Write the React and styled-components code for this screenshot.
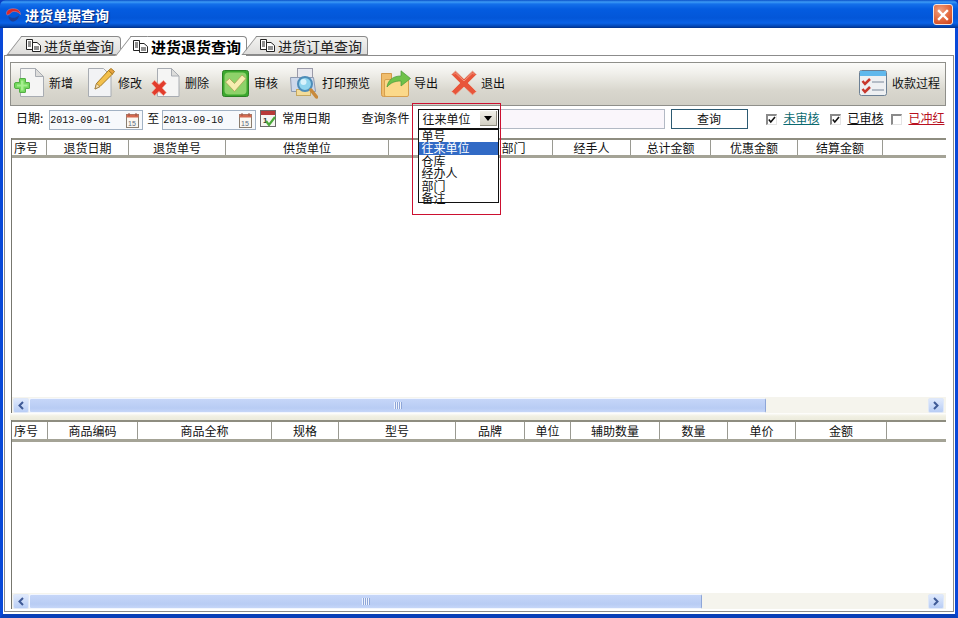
import React from "react";
import styled, { createGlobalStyle } from "styled-components";

const Global = createGlobalStyle`
  html, body { margin: 0; padding: 0; background: #fff; overflow: hidden; }
  * { box-sizing: border-box; }
  body { font: 12px "Noto Sans CJK SC", "Liberation Sans", sans-serif; color: #111; }
`;

const Window = styled.div`
  width: 958px; height: 618px; display: flex; flex-direction: column; background: #0a3fc4;
`;
const TitleBar = styled.div`
  height: 28px; flex: none; display: flex; align-items: center; padding: 1px 5px 0 6px;
  background: linear-gradient(180deg, #0a50c8 0, #3d9bf5 2px, #1470ea 4px, #045ce0 9px, #0356d8 18px, #0a62e6 23px, #0348b8 26px, #003088 28px);
  border-radius: 6px 6px 0 0;
`;
const Title = styled.span`
  margin-left: 4px; color: #fff; font-size: 14px; font-weight: 700; text-shadow: 1px 1px 1px #06297a;
`;
const CloseBtn = styled.div`
  margin-left: auto; width: 20px; height: 21px; border: 1px solid #f4e6e0; border-radius: 3px;
  display: flex; align-items: center; justify-content: center;
  background: radial-gradient(circle at 35% 30%, #f0a080 0, #e2673c 55%, #c93d18 100%);
`;
const Frame = styled.div`
  flex: 1; min-height: 0; display: flex; flex-direction: column; background: #fff; padding-top: 8px;
  border-left: 3px solid #0848d8; border-right: 3px solid #0848d8; border-bottom: 4px solid #0a40b8;
`;
const TabStrip = styled.div`
  height: 19px; flex: none; display: flex; align-items: stretch; padding-left: 19px;
  position: relative; z-index: 1;
`;
const Tab = styled.div`
  position: relative; display: flex; align-items: center; gap: 3px; margin-right: ${p => p.$mr}px;
  width: ${p => p.$w}px; height: ${p => p.$active ? 20 : 19}px; padding-left: ${p => p.$pl}px; white-space: nowrap;
  border: 1px solid #8a8a8a; border-left: none; ${p => p.$active ? "border-bottom: none;" : ""}
  border-radius: 0 4px 0 0;
  background: ${p => p.$active ? "#fff" : "linear-gradient(180deg,#f3f3f1,#dedddb)"};
  font-size: ${p => p.$active ? 15 : 14}px; font-weight: ${p => p.$active ? 700 : 400}; line-height: 1;
  color: ${p => p.$active ? "#000" : "#222"};
  &::before {
    content: ""; position: absolute; top: -1px; bottom: ${p => p.$active ? 0 : -1}px; left: -8px; width: 16px;
    transform: skewX(-38deg); border-left: 1px solid #8a8a8a; border-top: 1px solid #8a8a8a;
    background: ${p => p.$active ? "#fff" : "linear-gradient(180deg,#f3f3f1,#dedddb)"};
    border-bottom: ${p => p.$active ? "none" : "1px solid #8a8a8a"};
  }
  & > * { position: relative; z-index: 1; }
`;
const Panel = styled.div`
  flex: 1; min-height: 0; display: flex; flex-direction: column;
  margin: 0 1px 2px 1px; padding: 6px 7px 2px 5px; border: 1px solid #8c8c8c; background: #fff;
`;
const Toolbar = styled.div`
  height: 44px; flex: none; display: flex; align-items: center; padding: 0 5px 2px 3px;
  border: 1px solid #8f8f8a;
  background: linear-gradient(180deg, #fbfbf9 0, #f0efea 25%, #d9d7ce 65%, #d1cfc6 100%);
`;
const Tool = styled.div`
  display: flex; align-items: center; gap: ${p => p.$gap}px; margin-left: ${p => p.$ml || 0}px; flex: none;
  ${p => p.$right ? "margin-left: auto;" : ""}
`;
const ToolLabel = styled.span`font-size: 12px; line-height: 1; color: #111;`;

const FilterRow = styled.div`
  height: 32px; flex: none; display: flex; align-items: flex-start; padding: 3px 0 0 6px; font-size: 12px;
`;
const FilterText = styled.span`
  height: 20px; line-height: 18px; margin-left: ${p => p.$ml || 0}px; flex: none;
  color: ${p => p.$color || "#111"}; ${p => p.$underline ? "text-decoration: underline;" : ""}
`;
const DateBox = styled.div`
  width: 94px; height: 20px; margin: 1px 0 0 ${p => p.$ml}px; flex: none; display: flex; align-items: center;
  justify-content: space-between; padding: 0 1px 0 0; border: 1px solid #a2b2c4; background: #f7f9fc;
  font: 10px "Liberation Mono", monospace; color: #111;
`;
const Combo = styled.div`
  position: relative; width: 81px; height: 20px; margin-left: ${p => p.$ml}px; flex: none; z-index: 3;
  display: flex; align-items: center; justify-content: space-between; padding: 0 1px 1px 3px;
  border: 1px solid #111; background: #fff; font-size: 12px;
`;
const ComboArrow = styled.span`
  width: 17px; height: 15px; display: flex; align-items: center; justify-content: center;
  background: linear-gradient(180deg,#f2f1ea,#d3d0c4); border-right: 1px solid #8e8c80; border-bottom: 1px solid #8e8c80;
  &::after { content: ""; border: 4px solid transparent; border-top: 5px solid #000; border-bottom: none; }
`;
const Highlight = styled.div`
  position: absolute; left: -7px; top: -7px; width: 89px; height: 112px; border: 1px solid #cc1030; pointer-events: none;
`;
const DropList = styled.div`
  position: absolute; left: -1px; top: 18px; width: 81px; height: 75px; border: 1px solid #111; border-top-width: 2px;
  background: #fff;
`;
const DropItem = styled.div`
  height: 12.4px; line-height: 12px; padding-left: 2px; font-size: 12px; white-space: nowrap;
  background: ${p => p.$sel ? "#316ac5" : "transparent"}; color: ${p => p.$sel ? "#fff" : "#111"};
`;
const SearchInput = styled.div`
  width: 166px; height: 20px; flex: none; border: 1px solid #b2b9c4; border-left: none; background: #faf6fb;
`;
const QueryBtn = styled.div`
  width: 77px; height: 20px; margin-left: 6px; flex: none; border: 1px solid #2c5a72; background: #fff; padding: 0 2px 1px 0;
  display: flex; align-items: center; justify-content: center; font-size: 12px;
`;
const Check = styled.span`
  width: 11px; height: 11px; margin-left: ${p => p.$ml}px; margin-top: 5px; flex: none; background: #fff;
  border: 2px solid #8a8a8a; border-right: 1px solid #e4e4e4; border-bottom: 1px solid #e4e4e4;
  display: flex; align-items: center; justify-content: center;
`;

const GridWrap = styled.div`
  flex: ${p => p.$flex}; height: ${p => p.$h}px; min-height: 0; margin-left: 1px; background: #fff;
  border-left: 1px solid #77776f; display: flex; flex-direction: column; overflow: hidden;
`;
const HeaderRow = styled.div`
  height: ${p => p.$h}px; flex: none; display: flex; background: #fff;
  border-top: 2px solid #8e8d80; border-bottom: 3px solid #a4a396;
`;
const HeadCell = styled.div`
  width: ${p => p.$w}px; flex: ${p => p.$w ? "none" : 1}; display: flex; align-items: center; justify-content: center;
  font-size: 12px; line-height: 1; color: #111; border-right: ${p => p.$w ? "1px solid #9a9a92" : "none"};
  ${p => p.$left ? "justify-content: flex-start; padding-left: 2px;" : ""}
`;
const Scroll = styled.div`
  height: 16px; flex: none; margin-left: 1px; display: flex; align-items: center; padding: 0 2px 0 1px;
  background: #f5f4ed; border-left: 1px solid #77776f;
`;
const ScrollBtn = styled.div`
  width: 16px; height: 15px; flex: none; border: 1px solid #dfe8f8; border-radius: 2px;
  background: linear-gradient(180deg,#dfe9fc,#b8cdf5); display: flex; align-items: center; justify-content: center;
`;
const Thumb = styled.div`
  width: ${p => p.$w}px; height: 15px; flex: none; border: 1px solid #f2f6fe; border-right-color: #8ea6d8; border-radius: 2px;
  background: linear-gradient(180deg,#c6d6f8,#b8ccf4 70%,#c6d6f8); display: flex; align-items: center; justify-content: center;
`;
const Grip = styled.span`
  width: 8px; height: 7px;
  background: repeating-linear-gradient(90deg,#eef3fd 0 1px,#8ea6d8 1px 2px);
`;
const Spacer = styled.div`flex: 1;`;
const Divider = styled.div`height: 7px; flex: none; background: linear-gradient(180deg,#fff 0,#f1f0e4 3px,#ecebdc 100%);`;

const TabIcon = () => (
  <svg width="15" height="13" viewBox="0 0 15 13" style={{ flex: "none" }}>
    <path d="M.5.5h6v10h-6z" fill="#fff" stroke="#222" />
    <path d="M6.500 3.500h4.500l3.500 3v6h-8z" fill="#fff" stroke="#222" />
    <path d="M2 3h3M2 5h3M2 7h3M8 8h5M8 10h5" stroke="#222" />
  </svg>
);

const IconNew = () => (
  <svg width="30" height="30" viewBox="0 0 30 30" style={{ flex: "none" }}>
    <path d="M6.500.5h15l8 8v20h-23z" fill="#f5f5f4" stroke="#a8acb2" />
    <path d="M21.500.5v8h8z" fill="#dddddb" stroke="#a8acb2" />
    <path d="M6 10.500h5a.5.500 0 0 1 .5.500v3.500H15a.5.500 0 0 1 .5.500v5a.5.500 0 0 1-.5.500h-3.500v3.500a.5.500 0 0 1-.5.500H6a.5.500 0 0 1-.5-.500V20.500H2a1.500 1.500 0 0 1-1.500-1.500v-3a1.500 1.500 0 0 1 1.500-1.500h3.500V11a.5.500 0 0 1 .5-.500z" fill="#74d85e" stroke="#54ae46" />
    <path d="M7 12.500h2.500v4h4v2h-4v4H7v-4H3v-2h4z" fill="#a6ef90" />
  </svg>
);
const IconEdit = () => (
  <svg width="27" height="30" viewBox="0 0 27 30" style={{ flex: "none" }}>
    <path d="M.5.5h15l7.500 7.500v20.500H.5z" fill="#f2f3f5" stroke="#a8acb2" />
    <path d="M7 21l1.500-5.500L20.500 2.500l4 3.500L12 18.500z" fill="#f3c04c" stroke="#a87a20" />
    <path d="M7 21l1.500-5.500 3.500 3z" fill="#f6dfb0" stroke="#8a6a30" strokeWidth=".6" />
    <path d="M20.500 2.500l4 3.500 2-2.500L23 .5z" fill="#e9a440" stroke="#a87a20" />
  </svg>
);
const IconDelete = () => (
  <svg width="29" height="30" viewBox="0 0 29 30" style={{ flex: "none" }}>
    <path d="M6.500.5h14l7.500 7.500v20.500H6.500z" fill="#f5f5f4" stroke="#a8acb2" />
    <path d="M20.500.5v7.500H28z" fill="#dddddb" stroke="#a8acb2" />
    <path d="M.8 15.500L3.500 12.500 8 16.500l4.500-4 2.700 3-4 4.500 4 4.500-2.700 3L8 23.500l-4.500 4-2.700-3 4-4.500z" fill="#e23c2c" stroke="#ef9c8c" strokeWidth=".8" />
  </svg>
);
const IconAudit = () => (
  <svg width="27" height="27" viewBox="0 0 27 27" style={{ flex: "none" }}>
    <rect x=".5" y=".5" width="26" height="26" rx="2" fill="#3ca82e" stroke="#2c8024" />
    <rect x="2.500" y="2.500" width="22" height="22" rx="4" fill="#8ed26a" />
    <path d="M3.500 12l4-3.500 5 5 7.500-8.500 4 3.500-11.500 13z" fill="#f7edb0" stroke="#a89a50" strokeWidth=".7" />
  </svg>
);
const IconPreview = () => (
  <svg width="28" height="31" viewBox="0 0 28 31" style={{ flex: "none" }}>
    <rect x="7.500" y=".5" width="15" height="10" fill="#e8e8ee" stroke="#9a9aa8" />
    <path d="M.5 9.500h23l2 14H1.500z" fill="#cdd8ea" stroke="#8e9ab0" />
    <rect x="6.500" y="21.500" width="14" height="6" fill="#f3dc9a" stroke="#c6a860" />
    <circle cx="15" cy="16" r="7" fill="#8fd4ee" stroke="#4d8cb8" strokeWidth="2" />
    <circle cx="13.500" cy="14" r="3" fill="#d8f2fb" />
    <path d="M21 22l5.500 7" stroke="#c88a3c" strokeWidth="3.500" strokeLinecap="round" />
  </svg>
);
const IconExport = () => (
  <svg width="31" height="27" viewBox="0 0 31 27" style={{ flex: "none" }}>
    <path d="M1.500 3.500h10v23h-8a2 2 0 0 1-2-2z" fill="#f0bd6c" stroke="#d39a4a" />
    <rect x="4.500" y="9.500" width="24" height="17" rx="1.500" fill="#fbd98a" stroke="#d6a050" />
    <path d="M7 17c1-7 6-11 14-11V.8l9.500 7.700-9.500 7.500v-5c-6 0-10 1.500-14 6z" fill="#6fc24a" stroke="#46983a" strokeWidth=".7" />
  </svg>
);
const IconExit = () => (
  <svg width="26" height="26" viewBox="0 0 26 26" style={{ flex: "none" }}>
    <path d="M.5 4.500L4.500 1 13 9 21.500 1 25.500 4.500 17 13 25.500 21.500 21.500 25 13 17 4.500 25 .5 21.500 9 13z" fill="#e8553a" stroke="#e4c0b0" />
    <path d="M3 4.500l1.500-1.500 8.500 8 8.500-8 1.500 1.500" fill="none" stroke="#f29880" />
  </svg>
);
const IconProcess = () => (
  <svg width="28" height="26" viewBox="0 0 28 26" style={{ flex: "none" }}>
    <rect x=".5" y=".5" width="27" height="25" rx="2" fill="#eef0f2" stroke="#6c8094" />
    <rect x="1" y="1" width="26" height="5" fill="#60b8ec" />
    <path d="M13 11h12v2H13zM13 19h12v2H13z" fill="#b4bcc6" />
    <path d="M3.500 11l2.500 3 5-5M3.500 19l2.500 3 5-5" fill="none" stroke="#c8382c" strokeWidth="2.500" />
  </svg>
);
const IconCal = () => (
  <svg width="16" height="17" viewBox="0 0 16 17" style={{ flex: "none" }}>
    <rect x="1.500" y="2.500" width="12" height="13" fill="#fbf7f0" stroke="#8a7e70" />
    <rect x="1.500" y="2.500" width="12" height="3" fill="#d66a50" />
    <path d="M4 1v3M11 1v3" stroke="#a05040" />
    <text x="3" y="13.500" fontFamily="Liberation Sans" fontSize="7" fill="#5a6a80">15</text>
  </svg>
);
const IconCalCheck = () => (
  <svg width="17" height="18" viewBox="0 0 17 18" style={{ display: "block" }}>
    <rect x=".5" y=".5" width="15" height="16" fill="#f6f6f2" stroke="#6a6a6a" />
    <rect x="1" y="1" width="14" height="4" fill="#b83a38" />
    <text x="3" y="13" fontFamily="Liberation Sans" fontSize="8" fontWeight="700" fill="#333">1</text>
    <path d="M6 11l3 4 6-8" fill="none" stroke="#4aa83a" strokeWidth="2.200" />
  </svg>
);
const CheckMark = () => (
  <svg width="8" height="8" viewBox="0 0 8 8"><path d="M.8 3.500l2 2.500L7 1" fill="none" stroke="#111" strokeWidth="1.600" /></svg>
);
const Chevron = ({ right }) => (
  <svg width="8" height="9" viewBox="0 0 8 9">
    <path d={right ? "M2 1l3.500 3.500L2 8" : "M6 1L2.500 4.500 6 8"} fill="none" stroke="#3f5a96" strokeWidth="2" />
  </svg>
);
const AppLogo = () => (
  <svg width="15" height="14" viewBox="0 0 15 14" style={{ flex: "none" }}>
    <path d="M.5 5C1 1 6 0 10 1c3 .8 4.500 3 4.500 5.500-2-2.500-5-3.500-7.500-3C5 4 3.500 7 1.500 7 .8 7 .4 6 .5 5z" fill="#d8282c" stroke="#f0a0a0" strokeWidth=".4" />
    <path d="M2.500 8c2.500 2.500 7 2.500 10.500-.5-.5 3.500-3.500 6-6 6-2.500 0-4.500-2.500-4.500-5.500z" fill="#1c3f96" />
  </svg>
);
const CloseX = () => (
  <svg width="12" height="12" viewBox="0 0 12 12"><path d="M2 2l8 8M10 2l-8 8" stroke="#fff" strokeWidth="2.400" strokeLinecap="square" /></svg>
);

const Scrollbar = ({ thumb }) => (
  <Scroll>
    <ScrollBtn><Chevron /></ScrollBtn>
    <Thumb $w={thumb}><Grip /></Thumb>
    <Spacer />
    <ScrollBtn><Chevron right /></ScrollBtn>
  </Scroll>
);

const cols1 = [["序号", 35, 1], ["退货日期", 82], ["退货单号", 97], ["供货单位", 163], ["仓库", 86], ["部门", 78], ["经手人", 78], ["总计金额", 80], ["优惠金额", 87], ["结算金额", 85], ["", 0]];
const cols2 = [["序号", 36, 1], ["商品编码", 90], ["商品全称", 134], ["规格", 67], ["型号", 117], ["品牌", 69], ["单位", 46], ["辅助数量", 89], ["数量", 68], ["单价", 68], ["金额", 91], ["", 0]];

const Header = ({ cols, h }) => (
  <HeaderRow $h={h}>
    {cols.map(([t, w, l], i) => <HeadCell key={i} $w={w} $left={l}>{t}</HeadCell>)}
  </HeaderRow>
);

export default function App() {
  return (
    <Window>
      <Global />
      <TitleBar>
        <AppLogo />
        <Title>进货单据查询</Title>
        <CloseBtn><CloseX /></CloseBtn>
      </TitleBar>
      <Frame>
        <TabStrip>
          <Tab $w={99} $mr={10} $pl={4}><TabIcon /><span>进货单查询</span></Tab>
          <Tab $active $w={116} $mr={10} $pl={2}><TabIcon /><span>进货退货查询</span></Tab>
          <Tab $w={111} $mr={0} $pl={3}><TabIcon /><span>进货订单查询</span></Tab>
        </TabStrip>
        <Panel>
          <Toolbar>
            <Tool $gap={5}><IconNew /><ToolLabel>新增</ToolLabel></Tool>
            <Tool $gap={3} $ml={15}><IconEdit /><ToolLabel>修改</ToolLabel></Tool>
            <Tool $gap={5} $ml={9}><IconDelete /><ToolLabel>删除</ToolLabel></Tool>
            <Tool $gap={5} $ml={13}><IconAudit /><ToolLabel>审核</ToolLabel></Tool>
            <Tool $gap={4} $ml={12}><IconPreview /><ToolLabel>打印预览</ToolLabel></Tool>
            <Tool $gap={3} $ml={10}><IconExport /><ToolLabel>导出</ToolLabel></Tool>
            <Tool $gap={4} $ml={13}><IconExit /><ToolLabel>退出</ToolLabel></Tool>
            <Tool $gap={5} $right><IconProcess /><ToolLabel>收款过程</ToolLabel></Tool>
          </Toolbar>
          <FilterRow>
            <FilterText>日期:</FilterText>
            <DateBox $ml={6}>2013-09-01<IconCal /></DateBox>
            <FilterText $ml={4}>至</FilterText>
            <DateBox $ml={3}>2013-09-10<IconCal /></DateBox>
            <span style={{ marginLeft: 4, marginTop: 1 }}><IconCalCheck /></span>
            <FilterText $ml={5}>常用日期</FilterText>
            <FilterText $ml={31}>查询条件</FilterText>
            <Combo $ml={9}>
              往来单位
              <ComboArrow />
              <Highlight />
              <DropList>
                <DropItem>单号</DropItem>
                <DropItem $sel>往来单位</DropItem>
                <DropItem>仓库</DropItem>
                <DropItem>经办人</DropItem>
                <DropItem>部门</DropItem>
                <DropItem>备注</DropItem>
              </DropList>
            </Combo>
            <SearchInput />
            <QueryBtn>查询</QueryBtn>
            <Check $ml={18}><CheckMark /></Check>
            <FilterText $ml={6} $color="#0b6a70" $underline>未审核</FilterText>
            <Check $ml={11}><CheckMark /></Check>
            <FilterText $ml={6} $color="#111" $underline>已审核</FilterText>
            <Check $ml={8} />
            <FilterText $ml={6} $color="#b81020" $underline>已冲红</FilterText>
          </FilterRow>
          <GridWrap $flex={1}>
            <Header cols={cols1} h={20} />
          </GridWrap>
          <Scrollbar thumb={737} />
          <Divider />
          <GridWrap $flex="none" $h={173}>
            <Header cols={cols2} h={22} />
          </GridWrap>
          <Scrollbar thumb={673} />
        </Panel>
      </Frame>
    </Window>
  );
}
